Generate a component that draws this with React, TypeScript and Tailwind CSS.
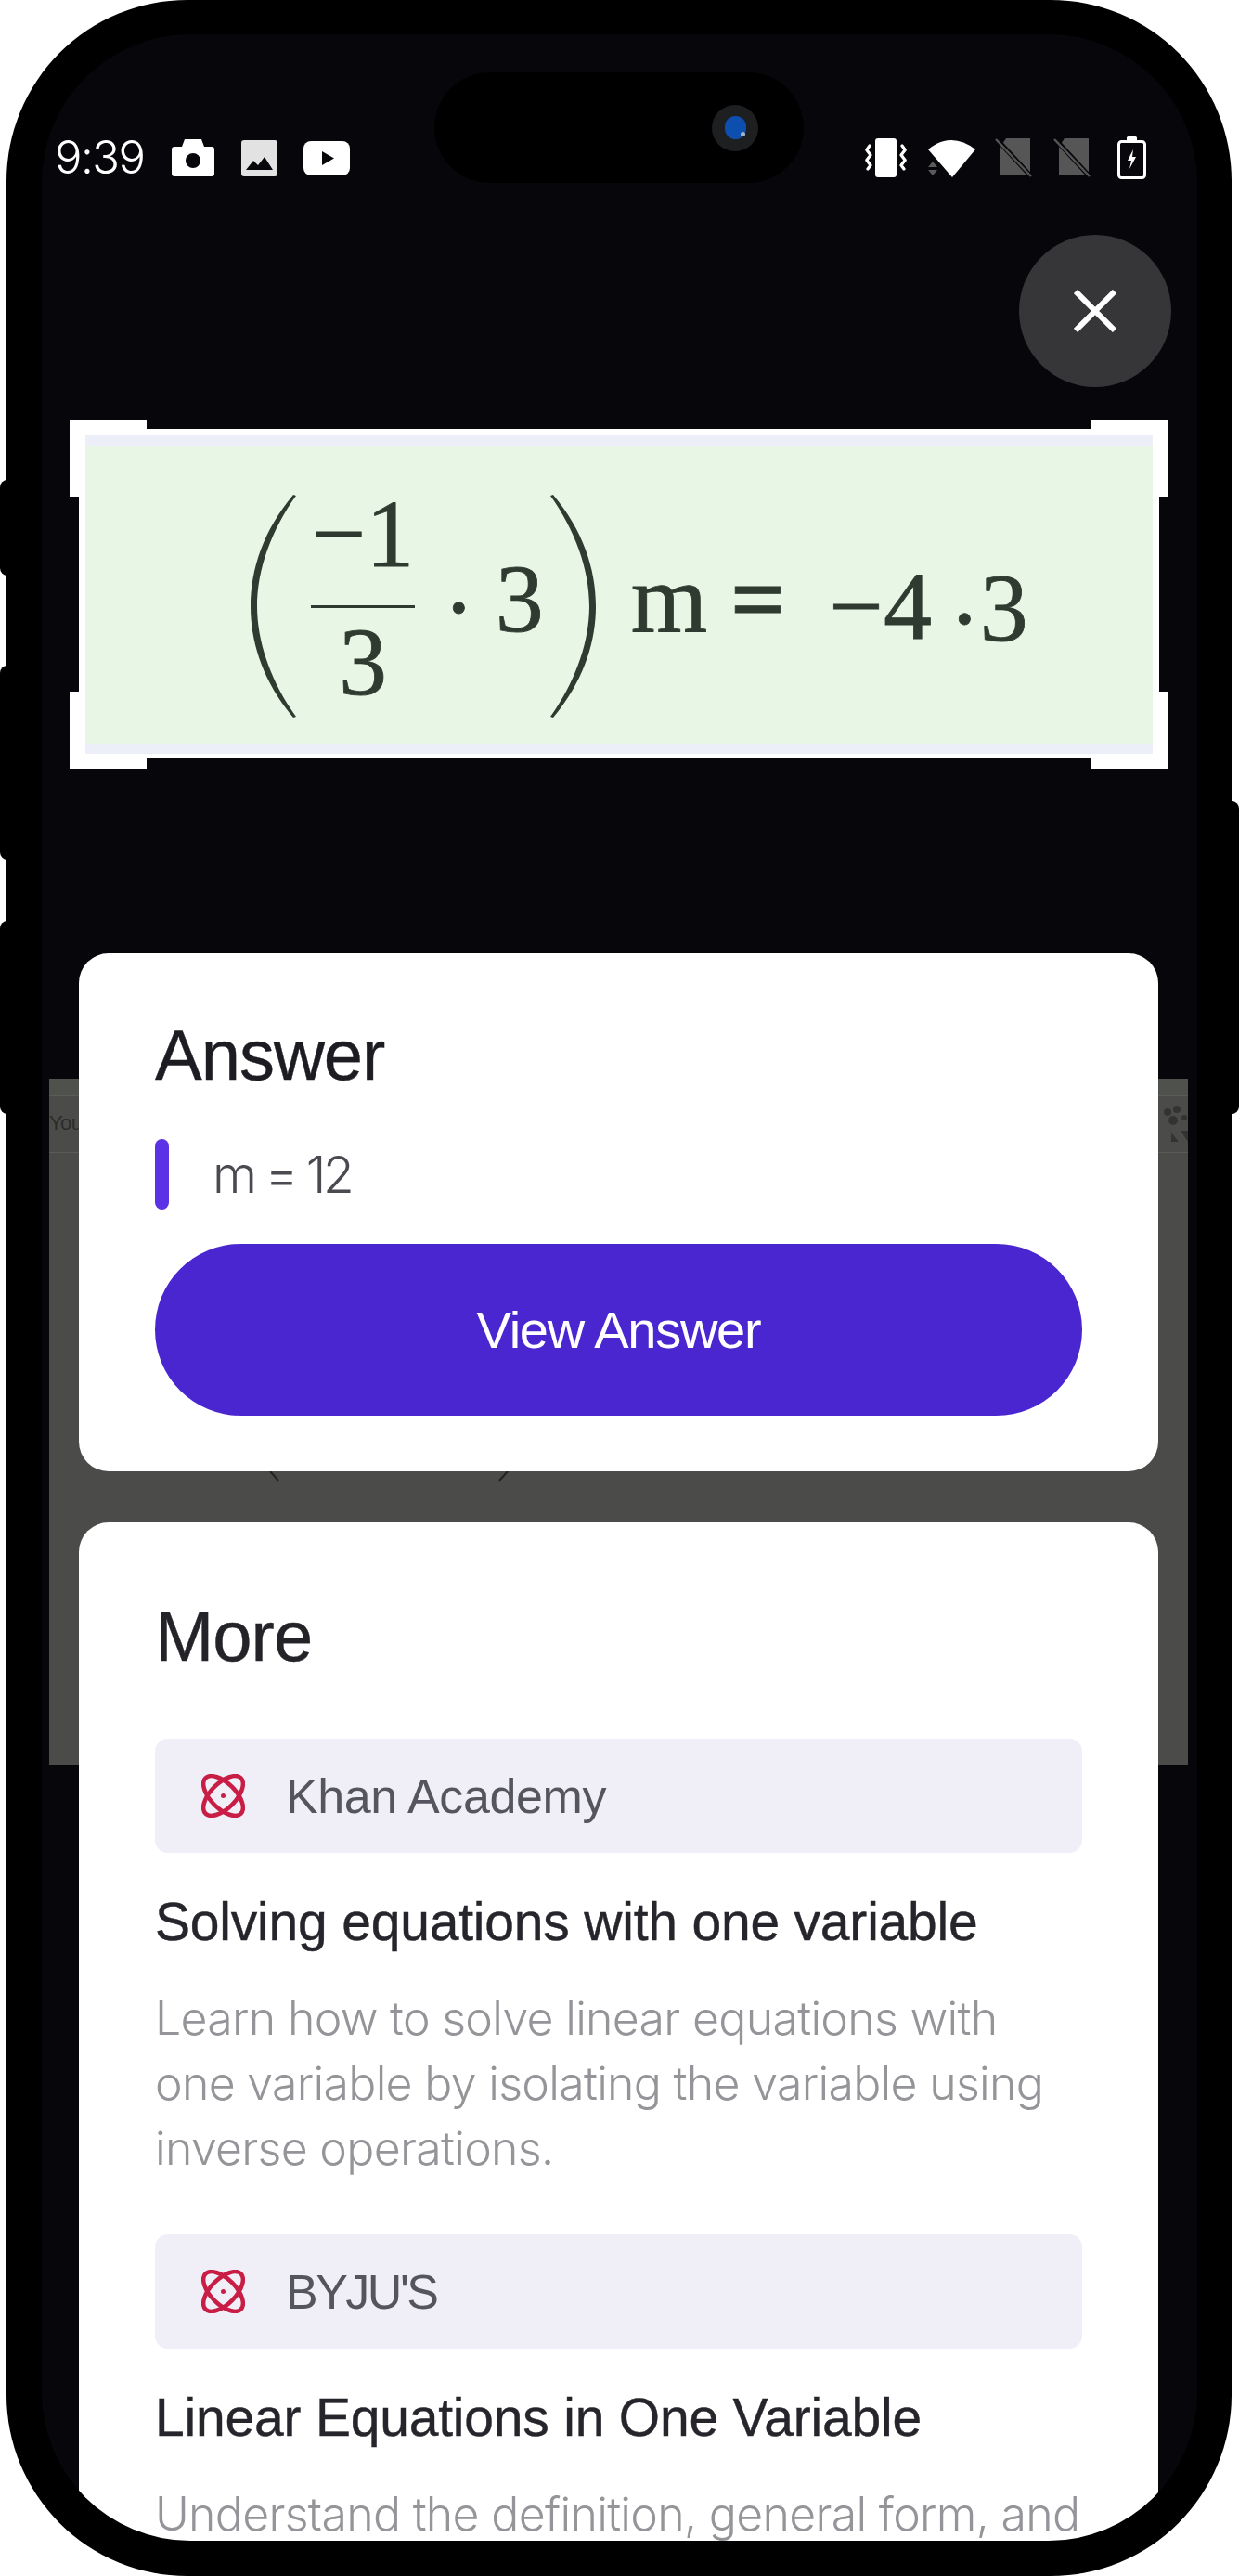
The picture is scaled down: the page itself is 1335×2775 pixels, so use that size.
const sans = "font-['Liberation_Sans',Arial,sans-serif]"
const light = "font-['Inter',sans-serif] font-light"
const serif = "font-['Liberation_Serif','Times_New_Roman',serif]"

const sources = [
  {
    site: "Khan Academy",
    siteTracking: "tracking-[-0.4px]",
    title: "Solving equations with one variable",
    lines: [
      "Learn how to solve linear equations with",
      "one variable by isolating the variable using",
      "inverse operations.",
    ],
  },
  {
    site: "BYJU'S",
    siteTracking: "tracking-[-2.500px]",
    title: "Linear Equations in One Variable",
    lines: ["Understand the definition, general form, and"],
  },
]

function CameraIcon() {
  return (
    <svg width="46" height="40" viewBox="0 0 46 40" className="ml-[31px]">
      <path
        fill="#fff"
        fillRule="evenodd"
        d="M14 0h18l3 8h8a3 3 0 0 1 3 3v26a3 3 0 0 1-3 3H3a3 3 0 0 1-3-3V11a3 3 0 0 1 3-3h8zM23 15a8 8 0 1 0 0 16 8 8 0 0 0 0-16z"
      />
    </svg>
  )
}

function GalleryIcon() {
  return (
    <svg width="39" height="39" viewBox="0 0 39 39" className="ml-[29px]">
      <rect width="39" height="39" rx="3" fill="#e2e2e2" />
      <path d="M5 32l8-10 5 5 7-9 9 14z" fill="#08080c" />
    </svg>
  )
}

function PlayIcon() {
  return (
    <svg width="50" height="37" viewBox="0 0 50 37" className="ml-[28px]">
      <rect width="50" height="37" rx="8" fill="#fff" />
      <path d="M20 11l13 7.500L20 26z" fill="#08080c" />
    </svg>
  )
}

function VibrateIcon() {
  return (
    <svg width="45" height="42" viewBox="0 0 45 42">
      <rect x="11" y="0" width="23" height="42" rx="3" fill="#fff" />
      <path
        d="M5 8L1.800 12.500 6 18 1.800 23.500 6 29 3 33M40 8L43.200 12.500 39 18 43.200 23.500 39 29 42 33"
        fill="none"
        stroke="#fff"
        strokeWidth="3.200"
        strokeLinecap="round"
        strokeLinejoin="round"
      />
    </svg>
  )
}

function WifiIcon() {
  return (
    <svg width="51" height="42" viewBox="0 0 51 42" className="ml-[23px]">
      <path d="M0 12Q25-8 51 12L26 42z" fill="#fff" />
      <path d="M5 25l-5 6h10zM0 34h10l-5 6z" fill="#5a5a5a" />
    </svg>
  )
}

function SimOffIcon({ className }: { className: string }) {
  return (
    <svg width="42" height="42" viewBox="0 0 42 42" className={className}>
      <path d="M12 0h26v40H6V9z" fill="#565656" />
      <path d="M2 1l37 40" stroke="#08080c" strokeWidth="5" />
      <path d="M1 1l38 40" stroke="#565656" strokeWidth="2.400" />
    </svg>
  )
}

function BatteryIcon() {
  return (
    <svg width="31" height="46" viewBox="0 0 31 46" className="ml-[27px]">
      <rect x="10" y="0" width="11" height="5" rx="1.500" fill="#fff" />
      <rect x="1.500" y="5.500" width="28" height="39" rx="3" fill="#08080c" stroke="#fff" strokeWidth="3" />
      <path d="M17 14l-6 12h4l-2 9 7-13h-4z" fill="#fff" />
    </svg>
  )
}

function Paren({ flip, className }: { flip?: boolean; className: string }) {
  return (
    <svg
      width="49"
      height="240"
      viewBox="0 0 49 240"
      className={`${flip ? "-scale-x-100" : ""} ${className}`}
    >
      <path
        d="M46 0C14 38 0 80 0 120s14 82 46 120l3-1C23 203 7 160 7 120S23 37 49 1z"
        fill="#2f3a30"
      />
    </svg>
  )
}

function Equation() {
  return (
    <div
      className={`flex h-[343px] items-start overflow-hidden bg-[#e7f6e5] border-y-[11px] border-[#eceef8] pl-[178px] text-[104px] leading-[100px] text-[#2f3a30] [-webkit-text-stroke:0.8px_#2f3a30] ${serif}`}
    >
      <Paren className="mt-[53px] shrink-0" />
      <div className="ml-[16px] mt-[45px] flex w-[112px] shrink-0 flex-col items-center">
        <span>−1</span>
        <div className="mt-[27px] h-[3px] w-full bg-[#2f3a30]" />
        <span className="mt-[8px]">3</span>
      </div>
      <span className="ml-[30px] mt-[124px]">·</span>
      <span className="ml-[22px] mt-[115px]">3</span>
      <Paren flip className="ml-[7px] mt-[53px] shrink-0" />
      <span className="ml-[38px] mt-[116px] text-[106px] leading-[100px]">m</span>
      <span className="ml-[25px] mt-[115px] font-bold">=</span>
      <span className="ml-[47px] mt-[123px]">−4</span>
      <span className="ml-[18px] mt-[136px]">·</span>
      <span className="ml-[-1px] mt-[125px]">3</span>
    </div>
  )
}

function SourceIcon() {
  return (
    <svg width="47" height="47" viewBox="0 0 47 47" fill="none" stroke="#c81e45" strokeWidth="4.500">
      <ellipse cx="23.500" cy="23.500" rx="27" ry="13.500" transform="rotate(45 23.500 23.500)" />
      <ellipse cx="23.500" cy="23.500" rx="27" ry="13.500" transform="rotate(-45 23.500 23.500)" />
      <circle cx="23.500" cy="23.500" r="2.500" fill="#c81e45" stroke="none" />
    </svg>
  )
}

export default function App() {
  return (
    <div className={`relative h-[2775px] w-[1335px] overflow-hidden bg-white ${sans}`}>
      {/* side buttons */}
      <div className="absolute left-0 top-[517px] h-[103px] w-[12px] rounded-l-lg bg-black" />
      <div className="absolute left-0 top-[717px] h-[209px] w-[12px] rounded-l-lg bg-black" />
      <div className="absolute left-0 top-[992px] h-[208px] w-[12px] rounded-l-lg bg-black" />
      <div className="absolute right-0 top-[863px] h-[337px] w-[12px] rounded-r-lg bg-black" />

      <div className="ml-[7px] h-full w-[1320px] rounded-[195px] bg-black pl-[38px] pt-[37px]">
        <div className="relative h-[2700px] w-[1245px] overflow-hidden rounded-[160px] bg-[#07070b]">
          {/* page dimmed behind the sheet */}
          <div className="absolute left-[8px] top-[1125px] h-[739px] w-[1227px] overflow-hidden bg-[#4b4c4a]">
            <div className="h-[19px] border-b border-[#5a5c58] bg-[#4e514c]" />
            <div className="h-[61px] border-b border-[#5a5c58] pt-[16px] text-[22px] leading-[26px] tracking-tight text-[#2c2c2c]">
              Your
            </div>
            <svg width="28" height="44" viewBox="0 0 28 44" className="absolute right-0 top-[28px]" fill="#333">
              <circle cx="6" cy="8" r="4" />
              <circle cx="16" cy="5" r="4" />
              <circle cx="12" cy="17" r="5" />
              <circle cx="24" cy="14" r="3" />
              <path d="M10 30l8 10h-8zM20 28h8v12z" />
            </svg>
            <svg width="260" height="14" viewBox="0 0 260 14" className="absolute left-[236px] top-[423px]" fill="none" stroke="#222" strokeWidth="2">
              <path d="M2 0l9 10M249 10l9-10" />
            </svg>
          </div>

          {/* status bar */}
          <div className="relative z-10 flex h-[156px] items-end justify-between pl-[15px] pr-[55px]">
            <div className="flex items-center">
              <span className={`-ml-[1px] w-[95px] shrink-0 whitespace-nowrap text-[49px] leading-[46px] tracking-[-1.500px] text-white ${light}`}>
                9:39
              </span>
              <CameraIcon />
              <GalleryIcon />
              <PlayIcon />
            </div>
            <div className="flex items-center">
              <VibrateIcon />
              <WifiIcon />
              <SimOffIcon className="ml-[21px]" />
              <SimOffIcon className="ml-[21px]" />
              <BatteryIcon />
            </div>
          </div>

          {/* camera island */}
          <div className="absolute left-[423px] top-[41px] z-10 flex h-[119px] w-[398px] items-center justify-end rounded-full bg-black pr-[49px]">
            <div className="flex h-[50px] w-[50px] items-center justify-center rounded-full bg-[#1d1f21]">
              <div className="relative h-[25px] w-[23px] rounded-full bg-[#0d4fae]">
                <div className="absolute bottom-[3px] right-[1px] h-[5px] w-[5px] rounded-full bg-[#9fb4c8]" />
              </div>
            </div>
          </div>

          <div className="mr-[28px] mt-[60px] flex justify-end">
            <div className="flex h-[164px] w-[164px] items-center justify-center rounded-full bg-[#363638]">
              <svg width="46" height="46" viewBox="0 0 46 46" stroke="#fff" strokeWidth="6">
                <path d="M2 2l42 42M44 2L2 44" />
              </svg>
            </div>
          </div>

          {/* scan frame */}
          <div className="relative ml-[30px] mt-[35px] h-[376px] w-[1184px] pt-[10px]">
            <div className="absolute left-0 top-0 h-[83px] w-[83px] border-l-[17px] border-t-[17px] border-white" />
            <div className="absolute right-0 top-0 h-[83px] w-[83px] border-r-[17px] border-t-[17px] border-white" />
            <div className="absolute bottom-0 left-0 h-[83px] w-[83px] border-b-[16px] border-l-[17px] border-white" />
            <div className="absolute bottom-0 right-0 h-[83px] w-[83px] border-b-[16px] border-r-[17px] border-white" />
            <div className="relative mx-[10px] h-[355px] bg-white px-[7px] pb-[5px] pt-[7px]">
              <Equation />
            </div>
          </div>

          {/* answer */}
          <section className="relative z-10 ml-[40px] mt-[199px] w-[1163px] rounded-[32px] bg-white px-[82px] pb-[60px] pt-[72px]">
            <h2 className="text-[76px] leading-[76px] tracking-[-1px] text-[#1c1c22] [-webkit-text-stroke:0.4px_#1c1c22]">Answer</h2>
            <div className="mt-[52px] flex items-center gap-[47px]">
              <div className="h-[76px] w-[15px] rounded-full bg-[#5b32e6]" />
              <span className={`text-[55px] leading-[76px] tracking-[-3.500px] text-[#4a4a50] ${light}`}>m = 12</span>
            </div>
            <button className="mt-[37px] flex h-[185px] w-full items-center justify-center rounded-full bg-[#4a26d1] text-[56px] tracking-[-1.250px] text-white">
              View Answer
            </button>
          </section>

          {/* more */}
          <section className="relative z-10 ml-[40px] mt-[55px] w-[1163px] rounded-t-[32px] bg-white px-[82px] pt-[85px]">
            <h2 className="text-[76px] leading-[76px] tracking-[-1px] text-[#232328] [-webkit-text-stroke:0.4px_#232328]">More</h2>
            <div className="mt-[72px]">
              {sources.map((s) => (
                <div key={s.site} className="mb-[58px]">
                  <div className="flex h-[123px] items-center gap-[44px] rounded-[14px] bg-[#f0eff8] pl-[50px]">
                    <SourceIcon />
                    <span className={`text-[52px] text-[#55555f] ${s.siteTracking}`}>{s.site}</span>
                  </div>
                  <h3 className="mt-[46px] text-[57px] leading-[56px] tracking-[-0.2px] text-[#25252b] [-webkit-text-stroke:0.4px_#25252b]">
                    {s.title}
                  </h3>
                  <p className={`mt-[41px] whitespace-nowrap text-[50px] leading-[70px] tracking-[-0.700px] text-[#949499] ${light}`}>
                    {s.lines.map((line) => (
                      <span key={line} className="block">
                        {line}
                      </span>
                    ))}
                  </p>
                </div>
              ))}
            </div>
          </section>
        </div>
      </div>
    </div>
  )
}
